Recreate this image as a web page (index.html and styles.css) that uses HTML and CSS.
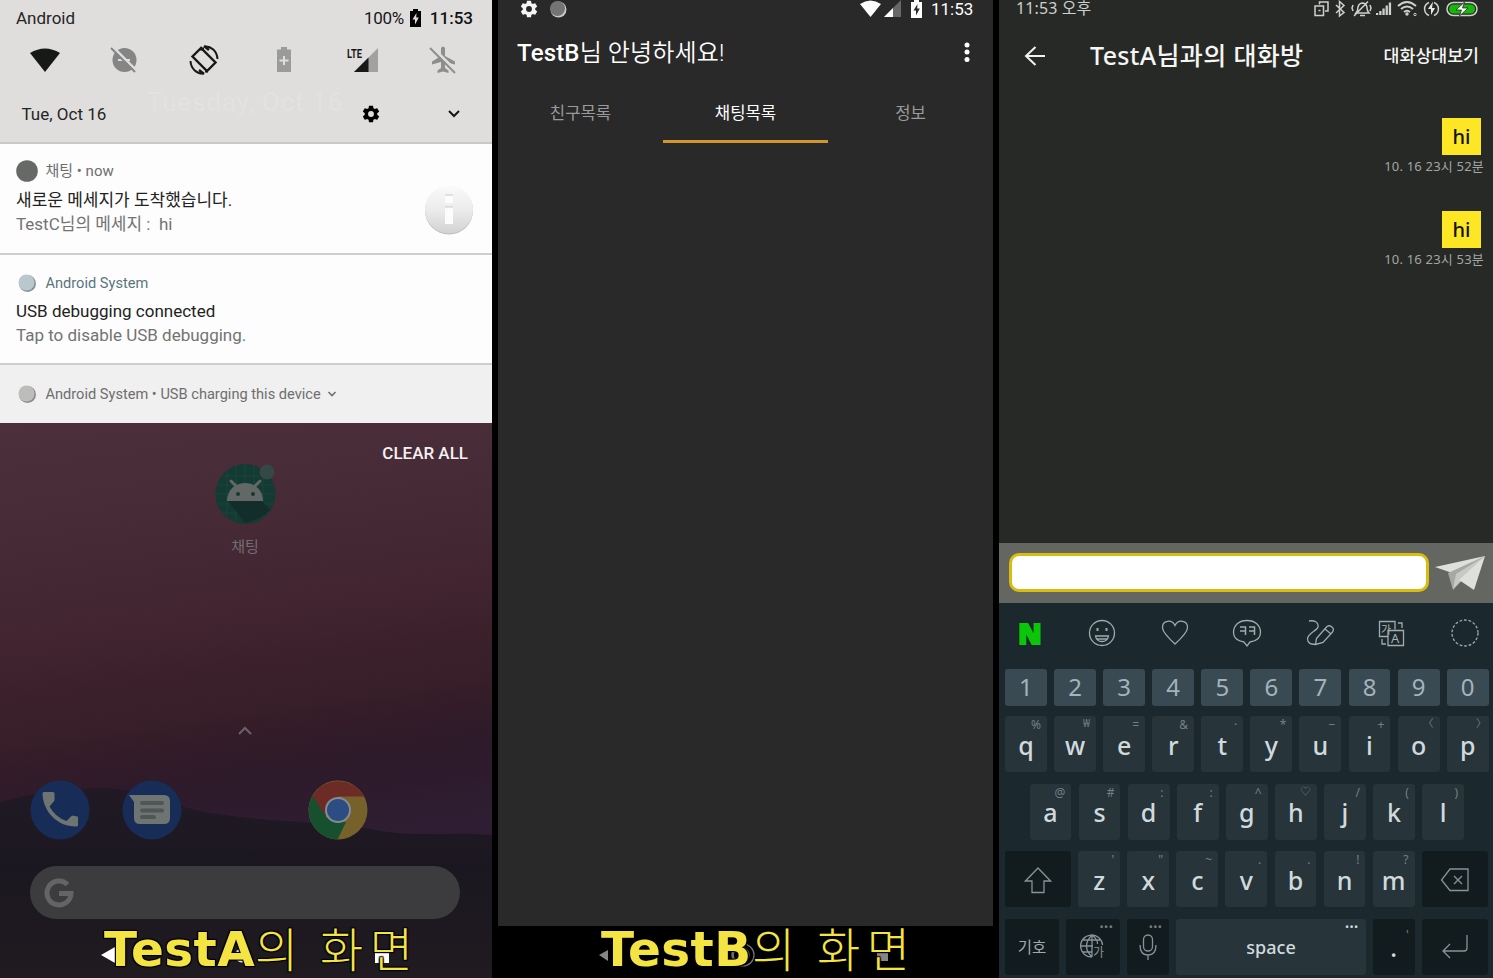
FILE: index.html
```html
<!DOCTYPE html>
<html lang="ko">
<head>
<meta charset="utf-8">
<title>Chat test</title>
<link rel="stylesheet" href="styles.css">
</head>
<body>
<svg class="defs" width="0" height="0">
  <defs>
    <path id="gear" d="M19.43 12.98c.04-.32.07-.64.07-.98s-.03-.66-.07-.98l2.11-1.65c.19-.15.24-.42.12-.64l-2-3.46c-.12-.22-.39-.3-.61-.22l-2.49 1c-.52-.4-1.08-.73-1.69-.98l-.38-2.65A.49.49 0 0 0 14 2h-4c-.25 0-.46.18-.49.42l-.38 2.65c-.61.25-1.17.59-1.69.98l-2.49-1c-.23-.09-.49 0-.61.22l-2 3.46c-.13.22-.07.49.12.64l2.11 1.65c-.04.32-.07.65-.07.98s.03.66.07.98l-2.11 1.65c-.19.15-.24.42-.12.64l2 3.46c.12.22.39.3.61.22l2.49-1c.52.4 1.08.73 1.69.98l.38 2.65c.03.24.24.42.49.42h4c.25 0 .46-.18.49-.42l.38-2.65c.61-.25 1.17-.59 1.69-.98l2.49 1c.23.09.49 0 .61-.22l2-3.46c.12-.22.07-.49-.12-.64l-2.11-1.65zM12 15.5A3.5 3.5 0 1 1 12 8.500a3.500 3.500 0 0 1 0 7z"/>
    <path id="battery" fill-rule="evenodd" d="M3 2V0h5v2h3v16H0V2zM6.500 4 2.500 10.500h2.500V15.500L8.800 8.500H6.200z"/>
    <linearGradient id="info-fill" x1="0" y1="0" x2="0" y2="1"><stop offset="0" stop-color="#fafafa"/><stop offset=".5" stop-color="#ececec"/><stop offset="1" stop-color="#d2d2d2"/></linearGradient>
  </defs>
</svg>
<main class="stage">

<section class="phone phone-a">
  <div class="shade">
    <div class="ghost">Tuesday, Oct 16</div>
    <div class="a-status">
      <span>Android</span><span class="pct">100%</span>
      <svg class="a-batt" width="11" height="18" viewBox="0 0 11 18"><use href="#battery"/></svg>
      <span class="a-clock">11:53</span>
    </div>
    <div class="quick">
      <svg width="32" height="26" viewBox="0 0 32 26"><path d="M1 6Q16-3 31 6L16 25z" fill="#171917"/></svg>
      <svg width="28" height="28" viewBox="0 0 28 28"><circle cx="14.500" cy="14" r="12" fill="#858585"/><path d="M8 14h12" stroke="#dfdedd" stroke-width="2"/><path d="M2 0l26 26" stroke="#dfdedd" stroke-width="2.500"/><path d="M1 2l24 24" stroke="#858585" stroke-width="2"/></svg>
      <svg width="30" height="30" viewBox="0 0 30 30" fill="none" stroke="#171917"><path d="M12 3 3.500 11.500 18 26 26.500 17.500z" stroke-width="2.400"/><path d="M11 4l4 0M16 26l3 0" stroke-width="3"/><path d="M15.500 1.500C22 1 28 6 28.500 14M14.500 28.500C8 29 2 24 1.500 16" stroke-width="2"/><path d="M15 1l5 4M15 29l-5-4" stroke-width="2.500"/></svg>
      <svg width="16" height="26" viewBox="0 0 16 26"><path d="M5 0h6v2.500h4V25H1V2.500h4z" fill="#9b9b9b"/><path d="M8 9v9M3.500 13.500h9" stroke="#e0dfde" stroke-width="2"/></svg>
      <svg width="32" height="28" viewBox="0 0 32 28"><path d="M31 2v24H7z" fill="#a1a1a1"/><path d="M21.500 11.500V26H7z" fill="#171917"/><text x="0" y="11.500" class="lte" textLength="15" lengthAdjust="spacingAndGlyphs">LTE</text></svg>
      <svg width="28" height="28" viewBox="0 0 28 28"><path d="M12 2q2-3 4 0v8l10 5.500v3L16 16v6l3.500 2.500V27L14 25.500 8.500 27v-2.500L12 22v-6L3 18.500v-3L12 10z" fill="#8e8e8e"/><path d="M2 0l26 26" stroke="#dfdedd" stroke-width="3"/><path d="M1 2l25 25" stroke="#8e8e8e" stroke-width="2"/></svg>
    </div>
    <div class="date-row">
      <span>Tue, Oct 16</span>
      <svg class="date-gear" width="20" height="20" viewBox="0 0 24 24"><use href="#gear"/></svg>
      <svg class="date-chev" width="14" height="10" viewBox="0 0 14 10" fill="none" stroke="#171717" stroke-width="2"><path d="M2 2l5 5 5-5"/></svg>
    </div>
  </div>
  <article class="note">
    <div class="note-body">
      <div class="note-head chat-head"><svg width="22" height="22"><circle cx="11" cy="11" r="10.800" fill="#666965"/></svg><span>채팅 • now</span></div>
      <div class="note-title">새로운 메세지가 도착했습니다.</div>
      <div class="note-text">TestC님의 메세지 :&nbsp; hi</div>
    </div>
    <svg class="info" width="50" height="50" viewBox="0 0 50 50"><circle cx="25" cy="25.500" r="24" fill="#bdbdbd"/><circle cx="25" cy="24.500" r="24" fill="url(#info-fill)"/><path d="M21 10h8v8h-8zM21 22h8v17h-8z" fill="#fcfcfc"/><path d="M21 10h8M21 22h8" stroke="#c9c9c9"/></svg>
  </article>
  <article class="note">
    <div class="note-body">
      <div class="note-head teal"><svg width="22" height="22"><circle cx="11.500" cy="11.500" r="8.500" fill="#819298"/><circle cx="10.500" cy="10.500" r="8" fill="#bac8cd"/></svg><span>Android System</span></div>
      <div class="note-title">USB debugging connected</div>
      <div class="note-text">Tap to disable USB debugging.</div>
    </div>
  </article>
  <article class="note-mini">
    <div class="note-head"><svg width="22" height="22"><circle cx="11.500" cy="11.500" r="8.500" fill="#8b8b89"/><circle cx="10.500" cy="10.500" r="8" fill="#bdbdbb"/></svg><span>Android System • USB charging this device</span>
    <svg class="mini-chev" width="10" height="8" viewBox="0 0 10 8" fill="none" stroke="#707070" stroke-width="1.600"><path d="M1.500 2 5 5.500 8.500 2"/></svg></div>
  </article>
  <div class="home">
    <svg class="hills" width="492" height="555" viewBox="0 0 492 555" preserveAspectRatio="none">
      <defs><linearGradient id="hill" x1="0" y1="0" x2="0" y2="1"><stop offset="0" stop-color="#211a26"/><stop offset=".4" stop-color="#1b1720"/><stop offset="1" stop-color="#201b20"/></linearGradient></defs>
      <path d="M0 379Q50 365 100 365C140 365 165 380 200 388C260 400 330 398 375 407C420 415 450 408 492 412V555H0z" fill="url(#hill)"/>
    </svg>
    <div class="clear">CLEAR ALL</div>
    <svg class="app" width="62" height="62" viewBox="0 0 62 62">
      <circle cx="30.500" cy="31" r="30" fill="#133a33"/><path d="M12 8v46M21 3v56M30 1v59M39 3v56M48 8v46M8 13h45M3 22h55M1 31h59M3 41h55M8 50h45" stroke="#20483f" stroke-width=".8"/>
      <path d="M13 38 30 60Q45 57 55 47L47 38z" fill="#132d2a"/>
      <path d="M12 38C12 14 48 14 48 38z" fill="#616865"/><path d="M16 18l5 5M45 18l-5 5" stroke="#616865" stroke-width="3" stroke-linecap="round"/><circle cx="23" cy="31" r="2" fill="#173832"/><circle cx="38" cy="31" r="2" fill="#173832"/><circle cx="52" cy="9" r="7.500" fill="#344943"/>
    </svg>
    <div class="app-label">채팅</div>
    <svg class="up" width="16" height="10" viewBox="0 0 16 10" fill="none" stroke="#6b616b" stroke-width="2"><path d="M2 8l6-6 6 6"/></svg>
    <div class="dock">
      <svg width="60" height="60" viewBox="0 0 60 60"><circle cx="30" cy="30" r="29.500" fill="#182c58"/><path d="M12.500 13.500q0-1.500 1.500-1.500h9q1.500 0 1.500 1.500v7l-5 6Q25 37 36.500 41l5.500-5.500 5.500 1q.5 0 .5 1.500v7q0 1.500-1.500 1.500C28 47 13 32 12.500 13.500z" fill="#6d7472"/></svg>
      <svg width="60" height="60" viewBox="0 0 60 60"><circle cx="30" cy="30" r="29.500" fill="#182c58"/><path d="M7 15h35q6 0 6 6v17q0 6-6 6H18q-6 0-6-6V22z" fill="#6d7472"/><path d="M20 23h20M20 30.500h20M20 37h12" stroke="#4f5656" stroke-width="4" stroke-linecap="round"/></svg>
      <svg class="chrome" width="60" height="60" viewBox="0 0 60 60"><circle cx="30" cy="30" r="29.500" fill="#77612a"/><path d="M4.500 16A29.500 29.500 0 0 1 56 16.500H30L17 37z" fill="#6c2b24"/><path d="M4.500 15.500 19 38l19 4-8.500 17.500A29.500 29.500 0 0 1 4.500 15.500z" fill="#17502f"/><circle cx="30" cy="30" r="13" fill="#858b92"/><circle cx="30" cy="30" r="11" fill="#2b4d82"/></svg>
    </div>
    <div class="search"><svg width="30" height="30" viewBox="0 0 30 30" fill="none" stroke="#646365" stroke-width="5"><path d="M23.500 6.500A12 12 0 1 0 27 15.500H15"/></svg></div>
    <div class="nav nav-a">
      <svg width="290" height="20" viewBox="0 0 290 20" fill="#fff"><path d="M0 10 14 2v16z"/><circle cx="141" cy="10.500" r="7"/><path d="M274 4h14v14h-14z"/></svg>
    </div>
  </div>
  <div class="caption"><b>TestA</b><span class="c1">의</span><span class="c2">화면</span></div>
</section>

<section class="phone phone-b">
  <div class="b-status">
    <svg class="b-gear" width="20" height="20" viewBox="0 0 24 24" fill="#f5f5f5"><use href="#gear"/></svg>
    <svg class="b-dot" width="18" height="18" viewBox="0 0 18 18"><circle cx="9.500" cy="9.500" r="8" fill="#c9c9c9"/><circle cx="8.500" cy="8.500" r="7.500" fill="#747474"/></svg>
    <svg class="b-wifi" width="21" height="17" viewBox="0 0 21 17"><path d="M0 4Q10.500-3 21 4L10.500 17z" fill="#fff"/></svg>
    <svg class="b-sig" width="17" height="17" viewBox="0 0 17 17"><path d="M17 0v17H0z" fill="#686868"/><path d="M9 8v9H0z" fill="#fff"/></svg>
    <svg class="b-batt" width="11" height="18" viewBox="0 0 11 18" fill="#fff"><use href="#battery"/></svg>
    <span>11:53</span>
  </div>
  <div class="b-title"><span><b>TestB</b>님 안녕하세요!</span>
    <svg width="6" height="22" viewBox="0 0 6 22" fill="#fff"><circle cx="3" cy="4" r="2.500"/><circle cx="3" cy="11" r="2.500"/><circle cx="3" cy="18.500" r="2.500"/></svg>
  </div>
  <div class="tabs"><div>친구목록</div><div class="on">채팅목록</div><div>정보</div></div>
  <div class="b-blank"></div>
  <div class="nav nav-b">
    <svg width="290" height="24" viewBox="0 0 290 24"><path d="M0 12 9 7v11z" fill="#858585"/><g fill="none" stroke="#777" stroke-width="1.200"><circle cx="139" cy="12" r="5"/><circle cx="142" cy="12" r="8"/><circle cx="144" cy="12" r="11"/></g><path d="M278 7h11v11h-11z" fill="#858585"/></svg>
  </div>
  <div class="caption"><b>TestB</b><span class="c1">의</span><span class="c2">화면</span></div>
</section>

<section class="phone phone-c">
  <div class="c-status"><span>11:53 오후</span>
    <svg width="166" height="18" viewBox="0 0 166 18" fill="none" stroke="#ced0cc" stroke-width="1.500">
      <path d="M6.500 4.500V2H15v9h-3M2 6h8.500v9.500H2zM5.500 10.500h2"/>
      <path d="M23 5l8 7.500-4.500 3.500V1.500L31 5.500 23 13"/>
      <path d="M43 13q2-2 2-6 1-4 5-4 4 1 4 5 0 3 2 5zM47 15.500h5M55 1.500 41 16M40 5l-1 3 1 3M57 5l1 3-1 3"/>
      <g fill="#ced0cc" stroke="none"><path d="M63 13h2.300v2H63zM66.200 11h2.300v4h-2.300zM69.400 8.500h2.300V15h-2.300zM72.600 5.500h2.300V15h-2.300zM75.800 2.500h2.300V15h-2.300z"/><circle cx="94" cy="14" r="1.700"/></g>
      <path d="M85 6q9-8 18 0M88 9q6-5 12 0M91 12q3-2.500 6 0" stroke-width="2"/><circle cx="102" cy="14.500" r="1.200" stroke-width="1"/>
      <path d="M116 2.500a7 7 0 0 0 0 13M121 2.500a7 7 0 0 1 0 13"/><path d="M120 1.500 115 9h3v6l4-7h-3z" fill="#e6e8e4" stroke="none"/>
      <rect x="134" y="2.500" width="30" height="13" rx="6.500"/><rect x="136" y="4.500" width="26" height="9" rx="4.500" fill="#16b60c" stroke="none"/><path d="M151.500 2 143 10h5.500l-2 6 8.500-8h-5.500z" fill="#fff" stroke="#262825" stroke-width=".8"/>
    </svg>
  </div>
  <header class="c-head">
    <svg width="22" height="22" viewBox="0 0 22 22" fill="none" stroke="#f2f2f2" stroke-width="2"><path d="M11.500 2 2 11l9.500 9M2 11h19"/></svg>
    <h1>TestA님과의 대화방</h1><span>대화상대보기</span>
  </header>
  <div class="chat">
    <div class="msg"><p>hi</p><time>10. 16 23시 52분</time></div>
    <div class="msg"><p>hi</p><time>10. 16 23시 53분</time></div>
  </div>
  <div class="compose"><div class="field"></div>
    <svg width="54" height="38" viewBox="0 0 54 38"><path d="M1 13 51 2 21 20z" fill="#dfe0dc"/><path d="M14 19 51 2 19 36z" fill="#a5a9a3"/><path d="M22 20 51 2 19 35z" fill="#c6c9c4"/><path d="M25 26 51 2 40 36z" fill="#dde0dc"/></svg>
  </div>
  <div class="keyboard">
    <div class="tools">
      <span class="n-logo">N</span>
      <svg viewBox="0 0 30 30"><circle cx="15" cy="15" r="12.500"/><path d="M8.500 18h13q-1 5.500-6.500 5.500T8.500 18zM10 21h10"/><path d="M10.500 10v3M19.500 10v3" stroke-width="2"/></svg>
      <svg viewBox="0 0 30 30"><path d="M15 26Q3 15 2.500 10C2 2 12 1 15 7.500 18 1 28 2 27.500 10 27 15 15 26 15 26z"/></svg>
      <svg viewBox="0 0 30 30"><path d="M18 24l-3 4-3-4C5 23 1.500 20 1.500 14.500 1.500 7 7 2.500 15 2.500S28.500 7 28.500 14.500C28.500 20 25 23 18 24z"/><path d="M8 9h5.500v8M8 13h5.500M17 9h5.500v8M17 13h5.500" stroke-width="1.500"/></svg>
      <svg viewBox="0 0 30 30"><path d="M4 3C9 2 14 4 13 9 12 13 2.500 15 2.500 21 2.500 25 6 27 11 26M11.500 20.500 21.500 9q2-2.500 5.500 0 2.500 2 .5 5L18 24.500l-7.500 2zM20 11l6 5"/></svg>
      <svg viewBox="0 0 30 30"><path d="M11 18.500H2.500v-15H18v8M11 12.500h15.500v15H11zM21 5h4v5M5 21v5h4"/><text x="4" y="15.500" class="ico-ko">가</text><text x="14" y="25" class="ico-la">A</text></svg>
      <svg viewBox="0 0 30 30"><circle cx="16" cy="15" r="13" stroke-dasharray="2.800 1.800"/></svg>
    </div>
    <div class="row nums"><i>1</i><i>2</i><i>3</i><i>4</i><i>5</i><i>6</i><i>7</i><i>8</i><i>9</i><i>0</i></div>
    <div class="row"><i>q<s>%</s></i><i>w<s class="small">₩</s></i><i>e<s>=</s></i><i>r<s>&amp;</s></i><i>t<s>·</s></i><i>y<s>*</s></i><i>u<s>−</s></i><i>i<s>+</s></i><i>o<s class="small">〈</s></i><i>p<s class="small close">〉</s></i></div>
    <div class="row mid"><i>a<s>@</s></i><i>s<s>#</s></i><i>d<s>:</s></i><i>f<s>:</s></i><i>g<s>^</s></i><i>h<s class="small">♡</s></i><i>j<s>/</s></i><i>k<s>(</s></i><i>l<s>)</s></i></div>
    <div class="row">
      <i class="dark wide"><svg width="28" height="28" viewBox="0 0 28 28"><path d="M14 2 26.500 15H20v11.500H8V15H1.500z"/></svg></i>
      <i>z<s>'</s></i><i>x<s>"</s></i><i>c<s>~</s></i><i>v<s>.</s></i><i>b<s>.</s></i><i>n<s>!</s></i><i>m<s>?</s></i>
      <i class="dark wide"><svg width="30" height="24" viewBox="0 0 30 24"><path d="M10 1h18v21.500H10L1.500 12zM14 8l8 8M22 8l-8 8"/></svg></i>
    </div>
    <div class="row">
      <i class="dark sym">기호</i>
      <i class="dark semi"><svg width="26" height="26" viewBox="0 0 26 26"><path d="M12 23A11 11 0 1 1 22.500 11M12 1v22M1 12h12M12 6h9M3 6h9M3 18h9M12 1q-11 11 0 22M12 1q6 5 5.500 9"/><text x="13" y="23" class="ico-globe">가</text></svg><s class="dots">•••</s></i>
      <i class="dark"><svg width="20" height="26" viewBox="0 0 20 26"><rect x="5.500" y="1" width="9" height="16" rx="4.500"/><path d="M2 11q0 10 8 10t8-10M10 21v5"/></svg><s class="dots">•••</s></i>
      <i class="space">space<s class="dots lit">•••</s></i>
      <i class="dark dot">.<s class="tick">'</s></i>
      <i class="dark wide"><svg width="28" height="26" viewBox="0 0 28 26"><path d="M26 1v13q0 3-3 3H2M9 10l-7 7 7 7"/></svg></i>
    </div>
  </div>
</section>
</main>
</body>
</html>
```
FILE: styles.css
```css
* { box-sizing: border-box; }
body { margin: 0; background: #e6e6e6; font-family: Roboto, "Noto Sans CJK KR", sans-serif; }
svg { display: block; flex: none; }
.defs { position: absolute; }
.stage { display: flex; gap: 6px; width: 1493px; height: 978px; background: #000; overflow: hidden; }
.phone { position: relative; display: flex; flex-direction: column; height: 978px; overflow: hidden; flex: none; white-space: nowrap; }
.phone-a { width: 492px; }
.phone-b { width: 495px; background: #292929; }
.phone-c { width: 494px; background: #272926; font-family: "Noto Sans", "Noto Sans CJK KR", sans-serif; }

/* notification shade */
.shade { position: relative; height: 144px; background: #dfdedd; border-bottom: 2px solid #c9c8c7; color: #252525; font-size: 17px; }
.ghost { position: absolute; left: 147px; top: 86px; font-size: 26px; line-height: 32px; letter-spacing: .9px; color: #e3e2e1; }
.a-status { display: flex; align-items: center; height: 36px; padding: 0 19px 0 16px; }
.pct { margin-left: auto; color: #171717; letter-spacing: -.3px; }
.a-batt { margin: 0 9px 0 6px; }
.a-clock { font-weight: 500; color: #111; font-size: 17px; }
.quick { display: grid; grid-template-columns: repeat(6, 1fr); place-items: center; height: 47px; padding: 0 9px 0 5px; }
.lte { font: 700 13px Roboto, sans-serif; fill: #171917; }
.date-row { display: flex; align-items: center; height: 61px; padding: 0 31px 0 21.500px; }
.date-gear { margin-left: auto; }
.date-chev { margin-left: 66px; }
.note { display: flex; justify-content: space-between; height: 110.500px; padding: 15px 18px 0 16px; background: #fdfdfd; border-bottom: 2px solid #cecece; }
.note-head { display: flex; align-items: center; height: 26px; font-size: 14.600px; color: #6e6e6e; }
.note-head span { margin-left: 7.500px; line-height: 20px; }
.chat-head { position: relative; top: -1px; }
.chat-head span { font-size: 15px; }
.teal { color: #58757f; }
.note-title { height: 30px; line-height: 30px; font-size: 17px; color: #222; }
.note-text { height: 22px; line-height: 18px; font-size: 17px; color: #737373; }
.info { margin-top: 26px; }
.note-mini { height: 58px; padding: 16px; background: #f0f0f0; }
.mini-chev { margin-left: 6px; }

/* dimmed home screen */
.home { position: relative; flex: 1; display: flex; flex-direction: column; background: linear-gradient(172deg, #4c303b 0%, #462b37 20%, #41242f 36%, #371e28 52%, #2d1a2a 62%, #2f1d33 75%, #221b28 100%); }
.hills { position: absolute; inset: 0; }
.home > :not(.hills) { position: relative; }
.clear { margin: 19px 24px 0 auto; font-size: 17px; font-weight: 500; line-height: 22px; color: #f4f1f2; }
.app { margin: -1px 0 0 215px; }
.app-label { margin-top: 10px; text-align: center; font-size: 15px; line-height: 24px; color: #776c72; width: 490px; }
.up { margin: 167px 0 0 237px; }
.dock { display: flex; gap: 32px; margin: 44px 0 0 30px; height: 60px; }
.chrome { margin-left: 94px; }
.search { display: flex; align-items: center; width: 430px; height: 53px; margin: 26px 0 0 30px; padding-left: 14px; border-radius: 27px; background: #3c3b3e; }
.nav svg { margin-left: 101px; }
.nav-a { margin-top: 26px; }
.caption { position: absolute; left: 104px; bottom: 0; height: 60px; display: flex; color: #f4e443; text-shadow: 1px 1px 1px #000, -1px -1px 1px #000, 1px -1px 1px #000, -1px 1px 1px #000; }
.caption b { width: 151px; font: 700 48.500px/62px "DejaVu Sans", sans-serif; letter-spacing: .4px; }
.caption span { font: 300 47px/58px "Noto Sans CJK KR", sans-serif; letter-spacing: 6.500px; }
.caption .c1 { width: 65px; }

/* TestB */
.b-status { display: flex; align-items: center; height: 17px; color: #fff; font-size: 17px; padding-left: 21px; }
.b-dot { margin-left: 10px; }
.b-wifi { margin-left: 293px; }
.b-sig { margin-left: 3px; }
.b-batt { margin: 0 9px 0 10px; }
.b-title { display: flex; justify-content: space-between; align-items: center; height: 69px; padding: 0 23px 0 19px; color: #fff; font-size: 24px; }
.b-title b { font-weight: 500; }
.b-title span { font-weight: 350; line-height: 34px; padding-top: 2px; letter-spacing: .15px; }
.tabs { display: grid; grid-template-columns: repeat(3, 1fr); height: 57px; text-align: center; font-size: 16.700px; line-height: 52px; color: #9a9a9a; }
.tabs div { padding-top: 1.500px; }
.tabs .on { color: #fff; border-bottom: 3px solid #d29530; }
.b-blank { flex: 1; }
.nav-b { height: 52px; padding-top: 17px; background: #000; }
.phone-b .caption { left: 103px; }

/* chat room */
.c-status { display: flex; justify-content: space-between; align-items: center; height: 18px; padding: 0 14px 0 17px; font-size: 16px; color: #ced0cc; }
.c-status span { line-height: 18px; padding-bottom: 2px; letter-spacing: .1px; }
.c-head { display: flex; align-items: center; height: 75px; padding: 0 14px 0 25px; color: #f5f5f3; }
.c-head h1 { margin: -4px auto 0 44px; font-size: 25px; font-weight: 500; letter-spacing: .35px; }
.c-head span { margin-top: -2px; font-size: 17.300px; font-weight: 500; }
.chat { flex: 1; display: flex; flex-direction: column; gap: 35.500px; padding: 25px 9px 0 0; }
.msg { display: flex; flex-direction: column; align-items: flex-end; height: 57px; }
.msg p { margin: 0 3px 0 0; width: 39px; height: 37px; line-height: 37px; text-align: center; font-size: 20px; font-weight: 500; color: #111; background: #fde725; }
.msg time { font-size: 13px; line-height: 22px; letter-spacing: .2px; color: #a3a5a2; }
.compose { display: flex; align-items: center; height: 60px; padding-left: 10px; background: #646662; }
.field { width: 420px; height: 39px; border: 3px solid #d8bd10; border-radius: 10px; background: #fff; }
.compose svg { margin-left: 5px; }
.keyboard { height: 375.500px; padding: 0 0 0 6px; background: #1b282d; }
.tools { display: flex; align-items: center; gap: 42.400px; height: 66px; padding: 0 0 6px 10px; }
.tools svg { width: 30px; height: 30px; fill: none; stroke: #a0aaaf; stroke-width: 1.300; }
.tools text { stroke: none; fill: #a9b2b7; }
.n-logo { flex: none; width: 30px; text-align: center; font: 800 28px/34px "Open Sans", sans-serif; color: #0ac70a; -webkit-text-stroke: 2px #0ac70a; }
.ico-ko { font: 11px "Noto Sans CJK KR", sans-serif; }
.ico-la { font: 13px "Noto Sans", sans-serif; }
.row { display: flex; gap: 7.200px; height: 56px; margin-bottom: 11.500px; }
.row i { position: relative; flex: none; width: 41.900px; display: flex; justify-content: center; align-items: center; padding-top: 1px; border-radius: 3px; background: #27343a; color: #d0dadd; font: 500 25px/28px "Noto Sans", sans-serif; }
.row s { position: absolute; right: 6px; top: 1px; font: 12px/15px "Noto Sans", "Noto Sans CJK KR", sans-serif; text-decoration: none; color: #738087; }
.row .small { font-size: 10.500px; line-height: 13px; }
.row .close { right: 2px; }
.row.nums { height: 37px; margin-bottom: 10.500px; }
.row.nums i { padding: 0; background: #3a4a53; color: #a3b3bc; font-weight: 400; font-size: 24px; }
.mid { margin-left: 24.500px; }
.row .dark { background: #121c1f; }
.row .wide { width: 66px; }
.row .semi { width: 54px; }
.row .sym { width: 54px; font: 15.500px/20px "Noto Sans CJK KR", sans-serif; color: #a0aaac; padding-bottom: 3px; }
.row .space { width: 189.200px; font-size: 18px; }
.row .dots { right: 7px; top: 0; font-size: 11px; letter-spacing: .4px; }
.row .tick { top: 8px; }
.row .lit { color: #d0dadd; }
.row svg { fill: none; stroke: #879397; stroke-width: 1.300; }
.row text { fill: #879397; stroke: none; }
.ico-globe { font: 12px "Noto Sans CJK KR", sans-serif; }
```
